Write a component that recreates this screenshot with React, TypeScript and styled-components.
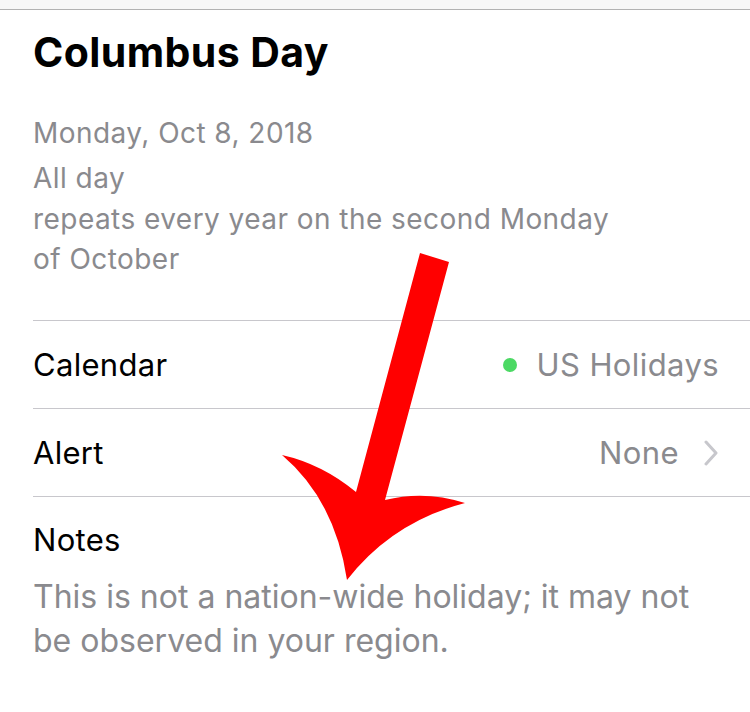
import React from "react";
import styled, { createGlobalStyle } from "styled-components";

const Global = createGlobalStyle`
  html, body { margin: 0; padding: 0; background: #ffffff; }
  body { font-family: Inter, "Noto Sans", "Liberation Sans", sans-serif; -webkit-font-smoothing: antialiased; }
`;

const Page = styled.div`
  position: relative;
  width: 750px;
  height: 712px;
  overflow: hidden;
  background: #fff;
`;

const TopBar = styled.div`
  height: 9px;
  background: #f7f7f7;
  border-bottom: 1px solid #b2b2b2;
`;

const Header = styled.div`
  padding: 18px 0 0 33px;
`;

const Title = styled.h1`
  margin: 0;
  font-size: 41px;
  line-height: 48px;
  font-weight: 700;
  color: #000;
  letter-spacing: 0.4px;
`;

const Details = styled.div`
  margin-top: 36px;
  color: #8a8a8e;
  font-size: 28px;
  letter-spacing: 0.45px;
`;

const DetailLine = styled.div<{ $gap?: number }>`
  line-height: 42px;
  margin-bottom: ${(p) => p.$gap ?? 0}px;
`;

const Repeat = styled.div`
  line-height: 40px;
  width: 590px;
`;

const List = styled.div`
  margin: 41px 0 0 33px;
`;

const Row = styled.div`
  height: 87px;
  border-top: 1px solid #c8c7cc;
  display: flex;
  align-items: center;
  justify-content: space-between;
  padding-right: 31px;
`;

const Label = styled.span`
  font-size: 31px;
  color: #000;
  letter-spacing: 0.3px;
`;

const Value = styled.span<{ $gap: number }>`
  display: flex;
  align-items: center;
  gap: ${(p) => p.$gap}px;
  font-size: 31px;
  color: #8a8a8e;
  letter-spacing: 0.4px;
`;

const Dot = styled.span<{ $color: string }>`
  width: 14px;
  height: 14px;
  border-radius: 50%;
  background: ${(p) => p.$color};
`;

const NotesBlock = styled.div`
  border-top: 1px solid #c8c7cc;
  padding-top: 21px;
`;

const NotesLabel = styled.div`
  font-size: 31px;
  line-height: 44px;
  color: #000;
  letter-spacing: 0.3px;
`;

const NotesBody = styled.div`
  margin-top: 13px;
  font-size: 32px;
  line-height: 44px;
  color: #8a8a8e;
  width: 690px;
`;

const Overlay = styled.svg`
  position: absolute;
  left: 0;
  top: 0;
  pointer-events: none;
`;

const Chevron = () => (
  <svg width="16" height="26" viewBox="0 0 16 26">
    <polyline points="3,2 13,13 3,24" fill="none" stroke="#c7c7cc" strokeWidth="3" strokeLinecap="round" strokeLinejoin="round" />
  </svg>
);

export default function App() {
  return (
    <Page>
      <Global />
      <TopBar />
      <Header>
        <Title>Columbus Day</Title>
        <Details>
          <DetailLine $gap={3}>Monday, Oct 8, 2018</DetailLine>
          <DetailLine>All day</DetailLine>
          <Repeat>repeats every year on the second Monday of October</Repeat>
        </Details>
      </Header>
      <List>
        <Row>
          <Label>Calendar</Label>
          <Value $gap={20}>
            <Dot $color="#4cd964" />
            US Holidays
          </Value>
        </Row>
        <Row>
          <Label>Alert</Label>
          <Value $gap={24}>
            None
            <Chevron />
          </Value>
        </Row>
        <NotesBlock>
          <NotesLabel>Notes</NotesLabel>
          <NotesBody>This is not a nation-wide holiday; it may not be observed in your region.</NotesBody>
        </NotesBlock>
      </List>
      <Overlay width="750" height="712" viewBox="0 0 750 712">
        <path
          d="M 420 253 L 449 262 L 385 500 Q 425 490 465 503 Q 392 522 347 580 Q 335 500 282 455 Q 322 464 356 492 Z"
          fill="#ff0000"
        />
      </Overlay>
    </Page>
  );
}
